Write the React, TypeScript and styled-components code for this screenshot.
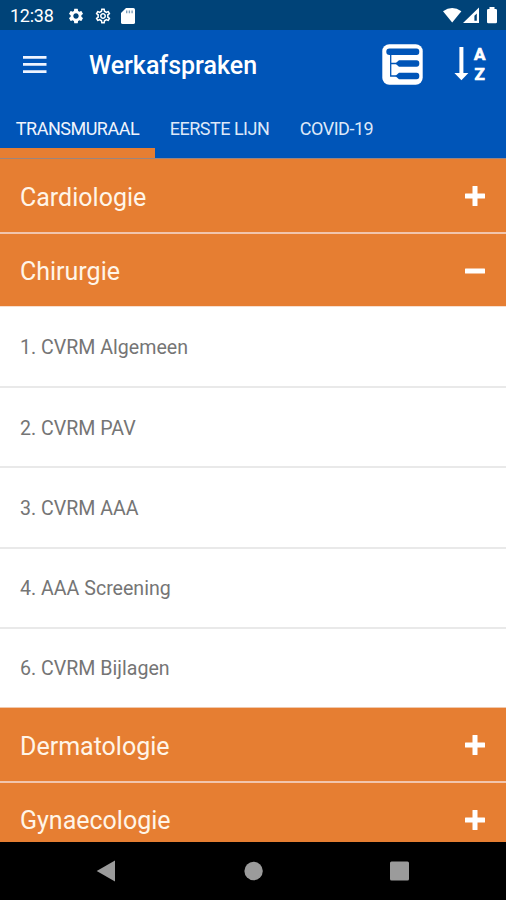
import React, { useState } from 'react';
import styled, { createGlobalStyle } from 'styled-components';
import { MdSettings, MdOutlineSettings } from 'react-icons/md';

const GlobalStyle = createGlobalStyle`
  * { box-sizing: border-box; }
  body { margin: 0; background: #000; font-family: Roboto, "Liberation Sans", sans-serif; }
  button { font: inherit; border: 0; margin: 0; padding: 0; background: none; color: inherit; cursor: pointer; }
  svg { display: block; flex: none; }
`;

const Screen = styled.div`
  width: 506px;
  height: 900px;
  display: flex;
  flex-direction: column;
  overflow: hidden;
  background: #fff;
`;

const StatusBar = styled.header`
  height: 30px;
  flex: none;
  display: flex;
  align-items: center;
  justify-content: space-between;
  padding: 2px 7px 0 10px;
  background: #004378;
  color: #fff;
`;

const StatusGroup = styled.div<{ $gap: number }>`
  display: flex;
  align-items: center;
  gap: ${(p) => p.$gap}px;
`;

const Clock = styled.span`
  width: 48px;
  font-size: 18px;
  line-height: 28px;
  letter-spacing: -0.25px;
  white-space: nowrap;
`;

const AppBar = styled.div`
  height: 69px;
  flex: none;
  display: flex;
  align-items: center;
  padding: 0 19px 0 23px;
  background: #0055b8;
  color: #fff;
`;

const Title = styled.h1`
  flex: 1;
  margin: 2px 0 0 42px;
  font-size: 25px;
  line-height: 30px;
  font-weight: 500;
`;

const IconButton = styled.button`
  display: flex;
`;

const Actions = styled.div`
  display: flex;
  align-items: center;
  gap: 31px;
`;

const TabBar = styled.nav`
  height: 60px;
  flex: none;
  display: flex;
  background: #0055b8;
  border-bottom: 1px solid #9a8580;
`;

const Tab = styled.button<{ $active: boolean; $width: number }>`
  width: ${(p) => p.$width}px;
  height: 59px;
  padding-top: ${(p) => (p.$active ? 10 : 0)}px;
  border-bottom: ${(p) => (p.$active ? '10px solid #e67e32' : '0')};
  color: ${(p) => (p.$active ? '#f0f4fc' : '#dde8f8')};
  font-size: 18px;
  line-height: 22px;
  letter-spacing: -0.5px;
  text-align: center;
  white-space: nowrap;
`;

const List = styled.main`
  flex: 1;
  min-height: 0;
  overflow: hidden;
`;

const SectionHeader = styled.button<{ $height: number; $divided: boolean }>`
  width: 100%;
  height: ${(p) => p.$height}px;
  display: flex;
  align-items: center;
  justify-content: space-between;
  padding: 4px 20px 0;
  background: #e67e32;
  border-bottom: ${(p) => (p.$divided ? '2px solid #f1c5ad' : '0')};
  color: #fff5e8;
  font-size: 25px;
  line-height: 30px;

  svg {
    margin-bottom: 3px;
  }
`;

const Items = styled.ul`
  margin: 0;
  padding: 0;
  list-style: none;
  border-top: 1px solid #f7dfcf;
  border-bottom: 1px solid #f0c9ae;
`;

const Item = styled.li`
  height: 80.25px;
  display: flex;
  align-items: center;
  padding: 3px 20px 0;
  background: #fff;
  color: #757575;
  font-size: 19.6px;
  line-height: 24px;

  &:first-child {
    height: 79px;
  }

  & + & {
    border-top: 2px solid #e9e9e9;
  }
`;

const NavBar = styled.footer`
  height: 58px;
  flex: none;
  display: flex;
  align-items: center;
  justify-content: space-between;
  padding: 0 96px;
  background: #000;
  color: #9b9b9b;
`;

const SdCardIcon = () => (
  <svg width="14" height="16" viewBox="0 0 14 16">
    <path fill="#fff" d="M5 0h7.3Q14 0 14 1.6v12.8q0 1.6-1.7 1.6H1.7Q0 16 0 14.4V5z" />
    <path fill="#7f9fba" d="M5 2.5h1.4v2.7H5zm2.7 0h1.4v2.7H7.7zm2.7 0h1.4v2.7h-1.4z" />
  </svg>
);

const SignalIcons = () => (
  <svg width="56" height="18" viewBox="0 0 56 18" fill="#fff">
    <path d="M0 4.2Q9.2-2.4 18.4 4.2L9.2 15.5z" />
    <path fillRule="evenodd" d="M36 .5V16H20zm-2.2 6-2.4 2.3v5h2.4z" />
    <path d="M46.5 0h5v2h1.2q1.3 0 1.3 1.3v11.6q0 1.3-1.3 1.3h-7.4q-1.3 0-1.3-1.3V3.3Q44 2 45.3 2h1.2z" />
  </svg>
);

const MenuIcon = () => (
  <svg width="24" height="18" viewBox="0 0 24 18" fill="#eef4ff">
    <path d="M0 0h23.5v2.8H0zM0 6.9h23.5v2.8H0zM0 14.2h23.5V17H0z" />
  </svg>
);

const TreeIcon = () => (
  <svg width="41" height="41" viewBox="0 0 41 41">
    <rect x=".3" y=".3" width="40.4" height="40.4" rx="7" fill="#fff" />
    <g fill="#0055b8">
      <path d="M7.5 4.5h27q2.8 0 2.8 3.3t-2.8 3.3h-27Q4.3 11.1 4.3 7.8t3.2-3.3z" />
      <path d="M17 16.2h17.5q2.8 0 2.8 3.3t-2.8 3.3H17l-3.7-3.3z" />
      <path d="M17 28.7h17.5q2.8 0 2.8 3.3t-2.8 3.3H17L13.3 32z" />
    </g>
    <path d="M8.7 10v22h6M8.7 19.5h6" fill="none" stroke="#0055b8" strokeWidth="1.3" />
  </svg>
);

const SortLetter = styled.text`
  font: 700 17px Roboto, "Liberation Sans", sans-serif;
  fill: #fff;
  stroke: #fff;
  stroke-width: 0.7px;
  text-anchor: middle;
`;

const SortIcon = () => (
  <svg width="33" height="43" viewBox="0 -4 33 43">
    <path fill="#fff" d="M5.4 0h4v26h5L7.4 33.2.4 26h5z" />
    <SortLetter x="25.7" y="12.8">A</SortLetter>
    <SortLetter x="25.7" y="33">Z</SortLetter>
  </svg>
);

const ToggleIcon = ({ open }: { open: boolean }) => (
  <svg width="22" height="20" viewBox="0 0 22 20" fill="#fff">
    <rect x="1" y="7.5" width="20" height="5" rx=".5" />
    {!open && <rect x="8.5" y="0" width="5" height="20" rx=".5" />}
  </svg>
);

const tabs = [
  { label: 'TRANSMURAAL', width: 155 },
  { label: 'EERSTE LIJN', width: 129 },
  { label: 'COVID-19', width: 105 },
];

const sections = [
  { name: 'Cardiologie', height: 75, items: [] as string[] },
  {
    name: 'Chirurgie',
    height: 72,
    items: ['1. CVRM Algemeen', '2. CVRM PAV', '3. CVRM AAA', '4. AAA Screening', '6. CVRM Bijlagen'],
  },
  { name: 'Dermatologie', height: 75, items: [] as string[] },
  { name: 'Gynaecologie', height: 74, items: [] as string[] },
];

export default function App() {
  const [activeTab, setActiveTab] = useState(0);
  const [openSection, setOpenSection] = useState('Chirurgie');

  return (
    <>
      <GlobalStyle />
      <Screen>
        <StatusBar>
          <StatusGroup $gap={9}>
            <Clock>12:38</Clock>
            <MdSettings size={18} />
            <MdOutlineSettings size={18} />
            <SdCardIcon />
          </StatusGroup>
          <SignalIcons />
        </StatusBar>
        <AppBar>
          <IconButton aria-label="Menu"><MenuIcon /></IconButton>
          <Title>Werkafspraken</Title>
          <Actions>
            <IconButton aria-label="Categorie"><TreeIcon /></IconButton>
            <IconButton aria-label="Sorteren"><SortIcon /></IconButton>
          </Actions>
        </AppBar>
        <TabBar>
          {tabs.map((tab, i) => (
            <Tab key={tab.label} $active={i === activeTab} $width={tab.width} onClick={() => setActiveTab(i)}>
              {tab.label}
            </Tab>
          ))}
        </TabBar>
        <List>
          {sections.map((s) => {
            const open = s.name === openSection;
            return (
              <React.Fragment key={s.name}>
                <SectionHeader
                  $height={s.height}
                  $divided={!open}
                  onClick={() => setOpenSection(open ? '' : s.name)}
                >
                  <span>{s.name}</span>
                  <ToggleIcon open={open} />
                </SectionHeader>
                {open && s.items.length > 0 && (
                  <Items>
                    {s.items.map((item) => <Item key={item}>{item}</Item>)}
                  </Items>
                )}
              </React.Fragment>
            );
          })}
        </List>
        <NavBar>
          <svg width="20" height="22" viewBox="0 0 20 22" fill="currentColor"><path d="M19 .5v21L.7 11z" /></svg>
          <svg width="20" height="20" viewBox="0 0 20 20" fill="currentColor"><circle cx="10.6" cy="10" r="9.2" /></svg>
          <svg width="20" height="20" viewBox="0 0 20 20" fill="currentColor"><rect x="0" y=".5" width="19" height="19" rx="1.5" /></svg>
        </NavBar>
      </Screen>
    </>
  );
}
